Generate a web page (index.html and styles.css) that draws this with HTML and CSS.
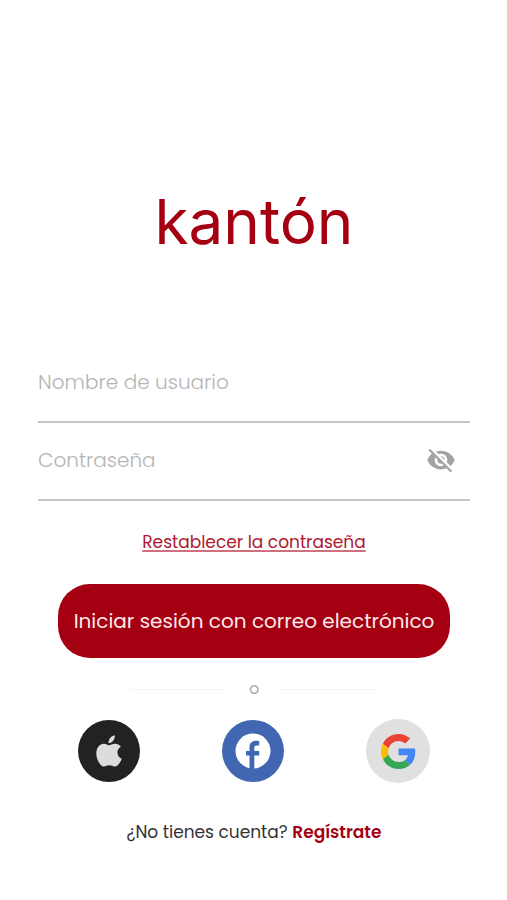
FILE: index.html
```html
<!DOCTYPE html>
<html lang="es">
<head>
<meta charset="utf-8">
<meta name="viewport" content="width=device-width, initial-scale=1">
<title>kantón</title>
<link rel="stylesheet" href="styles.css">
</head>
<body>
<main class="login">
  <h1 class="logo">kantón</h1>
  <form class="form">
    <div class="field">
      <input class="input" type="text" aria-label="Nombre de usuario" placeholder="Nombre de usuario" autocomplete="username">
    </div>
    <div class="field">
      <input class="input" type="password" aria-label="Contraseña" placeholder="Contraseña" autocomplete="current-password">
      <button class="toggle" type="button" aria-label="Mostrar contraseña">
        <svg viewBox="0 0 24 24" width="30" height="30" fill="#a3a3a3" aria-hidden="true"><path d="M12 7c2.76 0 5 2.24 5 5 0 .65-.13 1.26-.36 1.83l2.92 2.92c1.51-1.26 2.7-2.89 3.43-4.75-1.73-4.39-6-7.500-11-7.500-1.400 0-2.740.250-3.980.700l2.160 2.160C10.740 7.130 11.350 7 12 7zM2 4.270l2.280 2.280.46.46C3.080 8.300 1.780 10.020 1 12c1.730 4.390 6 7.500 11 7.500 1.550 0 3.030-.300 4.380-.840l.42.42L19.730 22 21 20.730 3.270 3 2 4.270zM7.530 9.800l1.550 1.550c-.05.21-.08.43-.08.65 0 1.660 1.340 3 3 3 .22 0 .44-.03.65-.08l1.550 1.550c-.67.33-1.410.53-2.200.53-2.760 0-5-2.240-5-5 0-.79.2-1.530.53-2.200zm4.310-.78l3.150 3.150.02-.16c0-1.660-1.340-3-3-3l-.17.01z"/></svg>
      </button>
    </div>
    <a class="reset" href="#reset">Restablecer la contraseña</a>
    <button class="submit" type="submit">Iniciar sesión con correo electrónico</button>
  </form>
  <div class="divider"><span>o</span></div>
  <div class="social">
    <button class="provider apple" type="button" aria-label="Apple">
      <svg viewBox="0 0 26 32" width="26" height="32" fill="#dcdcdc" aria-hidden="true"><path d="M12.600 8.300C12.300 4.300 15 1 18.800.2c.4 3.900-2.500 7.700-6.200 8.100z"/><path d="M13 10.200c1.500 0 3.200-1.500 6-1.500 2.400 0 4.600 1.200 5.800 3-5 3-4.200 9.800 1 12-1.200 3.300-4.100 7.800-7 7.800-2.100 0-3-1.200-5.500-1.200s-3.500 1.200-5.500 1.200C4.300 31.500.3 24.600.3 18.500c0-6 3.500-9.800 7.500-9.800 2.400 0 4 1.500 5.200 1.500z"/></svg>
    </button>
    <button class="provider facebook" type="button" aria-label="Facebook">
      <svg viewBox="0 0 36 36" width="36" height="36" aria-hidden="true"><circle cx="18" cy="18" r="17.500" fill="#fff"/><path fill="#4267b2" d="M14.500 36V22.500H11V18h3.500v-3.700c0-4.300 2.500-6.500 6.400-6.500 1.700 0 3.300.3 3.300.3v4.300h-2.300c-1.900 0-2.600.9-2.600 2.200V18h4.900v4.500h-4.900V36z"/></svg>
    </button>
    <button class="provider google" type="button" aria-label="Google">
      <svg viewBox="0 0 48 48" width="35" height="35" aria-hidden="true"><path fill="#ea4335" d="M24 9.500c3.540 0 6.710 1.220 9.210 3.600l6.850-6.850C35.900 2.380 30.470 0 24 0 14.620 0 6.510 5.380 2.560 13.220l7.980 6.190C12.430 13.720 17.740 9.500 24 9.500z"/><path fill="#4285f4" d="M46.980 24.550c0-1.570-.15-3.090-.38-4.550H24v9.020h12.940c-.58 2.960-2.260 5.480-4.780 7.180l7.730 6c4.510-4.180 7.090-10.360 7.090-17.650z"/><path fill="#fbbc05" d="M10.530 28.590c-.48-1.450-.76-2.990-.76-4.590s.27-3.140.76-4.590l-7.980-6.190C.92 16.460 0 20.120 0 24c0 3.880.92 7.540 2.560 10.780l7.970-6.190z"/><path fill="#34a853" d="M24 48c6.480 0 11.930-2.130 15.890-5.810l-7.730-6c-2.150 1.450-4.920 2.300-8.160 2.300-6.260 0-11.570-4.220-13.470-9.910l-7.980 6.190C6.510 42.620 14.620 48 24 48z"/></svg>
    </button>
  </div>
  <p class="signup">¿No tienes cuenta? <a href="#registro">Regístrate</a></p>
</main>
</body>
</html>
```
FILE: styles.css
```css
* {
  box-sizing: border-box;
}

body {
  margin: 0;
  background: #fff;
  color: #333;
  font-family: Poppins, Inter, "Open Sans", sans-serif;
}

button,
input {
  font: inherit;
}

button {
  padding: 0;
  border: 0;
  cursor: pointer;
}

svg {
  display: block;
}

.login {
  display: flex;
  flex-direction: column;
  padding: 182px 37px 40px 38px;
}

.logo {
  margin: 0;
  color: #a50011;
  font-family: Inter, sans-serif;
  font-size: 62px;
  font-weight: 400;
  line-height: 80px;
  text-align: center;
}

.form {
  display: flex;
  flex-direction: column;
  margin-top: 83px;
}

.field {
  display: flex;
  align-items: center;
  height: 78px;
  padding-right: 14px;
  padding-bottom: 2px;
  border-bottom: 2px solid #c6c6c6;
}

.input {
  flex: 1;
  min-width: 0;
  height: 40px;
  padding: 0;
  border: 0;
  outline: 0;
  background: none;
  color: #333;
  font-size: 20px;
}

.input::placeholder {
  color: #b4b4b4;
  font-weight: 300;
  opacity: 1;
}

.toggle {
  background: none;
}

.reset {
  align-self: center;
  margin-top: 28px;
  color: #b0182d;
  font-size: 17px;
  line-height: 26px;
  text-decoration-color: #d0707c;
  text-decoration-thickness: 2px;
  text-underline-offset: 2px;
}

.submit {
  height: 74px;
  margin: 29px 20px 0;
  border-radius: 32px;
  background: #a50011;
  color: #fbe9eb;
  font-size: 20px;
}

.divider {
  display: flex;
  align-items: center;
  gap: 22px;
  margin: 21px 92px 0;
  color: #aaa;
  font-size: 16px;
  line-height: 20px;
}

.divider::before,
.divider::after {
  content: "";
  flex: 1;
  height: 1px;
  background: #f3f3f3;
}

.social {
  display: flex;
  align-items: center;
  justify-content: space-between;
  margin: 20px 40px 0;
}

.provider {
  display: grid;
  place-items: center;
  width: 62px;
  height: 62px;
  border-radius: 50%;
}

.apple {
  background: #222;
}

.facebook {
  background: #4267b2;
}

.google {
  width: 64px;
  height: 64px;
  background: #e0e0e0;
}

.signup {
  margin: 36px 0 0;
  font-size: 17px;
  line-height: 26px;
  text-align: center;
}

.signup a {
  color: #a50011;
  font-weight: 600;
  text-decoration: none;
}
```
